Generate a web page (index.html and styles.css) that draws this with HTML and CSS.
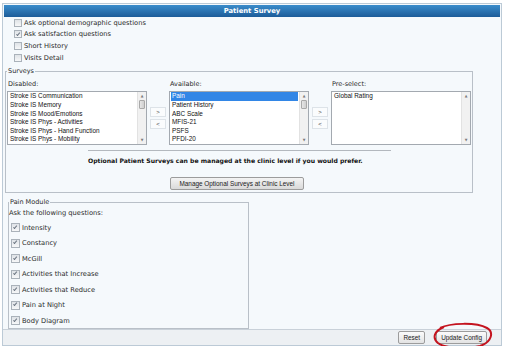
FILE: index.html
```html
<!DOCTYPE html>
<html lang="en">
  <head>
    <meta charset="UTF-8" />
    <title>Patient Survey</title>
    <link rel="stylesheet" href="styles.css">
  </head>
  <body>
    <div class="panel">
      <div class="title">Patient Survey</div>

      <div class="options">
        <label class="opt"><span class="cb"></span>Ask optional demographic questions</label>
        <label class="opt"><span class="cb checked"></span>Ask satisfaction questions</label>
        <label class="opt"><span class="cb"></span>Short History</label>
        <label class="opt"><span class="cb"></span>Visits Detail</label>
      </div>

      <fieldset class="surveys">
        <legend>Surveys</legend>
        <div class="lists">
          <div class="lbl">Disabled:</div>
          <div></div>
          <div class="lbl">Available:</div>
          <div></div>
          <div class="lbl">Pre-select:</div>

          <div class="listbox">
            <div class="items">
              <div class="item">Stroke IS Communication</div>
              <div class="item">Stroke IS Memory</div>
              <div class="item">Stroke IS Mood/Emotions</div>
              <div class="item">Stroke IS Phys - Activities</div>
              <div class="item">Stroke IS Phys - Hand Function</div>
              <div class="item">Stroke IS Phys - Mobility</div>
            </div>
            <div class="scroll"><span class="arr">&#9650;</span><span class="thumb"></span><span class="fill"></span><span class="arr">&#9660;</span></div>
          </div>
          <div class="movers">
            <button class="mv">&gt;</button>
            <button class="mv">&lt;</button>
          </div>
          <div class="listbox">
            <div class="items">
              <div class="item selected">Pain</div>
              <div class="item">Patient History</div>
              <div class="item">ABC Scale</div>
              <div class="item">MFIS-21</div>
              <div class="item">PSFS</div>
              <div class="item">PFDI-20</div>
            </div>
            <div class="scroll"><span class="arr">&#9650;</span><span class="thumb"></span><span class="fill"></span><span class="arr">&#9660;</span></div>
          </div>
          <div class="movers">
            <button class="mv">&gt;</button>
            <button class="mv">&lt;</button>
          </div>
          <div class="listbox">
            <div class="items">
              <div class="item">Global Rating</div>
            </div>
            <div class="scroll"><span class="arr">&#9650;</span><span class="fill"></span><span class="arr">&#9660;</span></div>
          </div>
        </div>

        <div class="notes">
          <div class="rule"></div>
          <p class="note">Optional Patient Surveys can be managed at the clinic level if you would prefer.</p>
        </div>
        <div class="manage">
          <button class="btn">Manage Optional Surveys at Clinic Level</button>
        </div>
      </fieldset>

      <fieldset class="pain">
        <legend>Pain Module</legend>
        <div class="ask">Ask the following questions:</div>
        <div class="questions">
          <label class="q"><span class="cb checked"></span>Intensity</label>
          <label class="q"><span class="cb checked"></span>Constancy</label>
          <label class="q"><span class="cb checked"></span>McGill</label>
          <label class="q"><span class="cb checked"></span>Activities that Increase</label>
          <label class="q"><span class="cb checked"></span>Activities that Reduce</label>
          <label class="q"><span class="cb checked"></span>Pain at Night</label>
          <label class="q"><span class="cb checked"></span>Body Diagram</label>
        </div>
      </fieldset>

      <div class="footer">
        <button class="btn">Reset</button>
        <span class="marked">
          <button class="btn">Update Config</button>
          <svg class="ring" width="61" height="27" viewBox="0 0 61 27">
            <path d="M8 6 C18 1 44 0 55 6 C62 10 60 20 48 24 C36 27 14 27 6 21 C0 16 2 9 12 5" fill="none" stroke="#c4141f" stroke-width="2" />
          </svg>
        </span>
      </div>
    </div>
  </body>
</html>
```

FILE: styles.css
```css
body {
  margin: 0;
  background-color: #fff;
  font-family: "DejaVu Sans", Verdana, sans-serif;
  font-size: 6.7px;
  color: #2a2a2a;
}

.panel {
  margin: 3px 0 0 2px;
  width: 500px;
  height: 343px;
  box-sizing: border-box;
  border: 1px solid #bccad6;
  background-color: #f5f9fc;
  display: flex;
  flex-direction: column;
}

.title {
  margin: 1px 1px 0 1px;
  height: 12px;
  line-height: 12px;
  background: linear-gradient(#3a8ccb, #1c5c99);
  color: #fff;
  font-weight: bold;
  font-size: 6.8px;
  text-align: center;
}

.options {
  padding-left: 11px;
}

.opt {
  display: flex;
  align-items: center;
  height: 11.6px;
}

.cb {
  width: 6px;
  height: 6px;
  border: 1px solid #aab2ba;
  background: linear-gradient(#dfe3e7, #f6f7f8);
  margin-right: 2px;
  position: relative;
}

.cb.checked::after {
  content: "";
  position: absolute;
  left: 2.2px;
  top: 0.3px;
  width: 1.4px;
  height: 3.2px;
  border: solid #6a7480;
  border-width: 0 0.8px 0.8px 0;
  transform: rotate(40deg);
}

fieldset {
  border: 1px solid #b9c0c8;
  margin: 0;
  padding: 0;
}

legend {
  padding: 0 1px;
  line-height: 9px;
  font-size: 6.5px;
}

.surveys {
  margin: 4px 0 0 2px;
  width: 468px;
  box-sizing: border-box;
  padding: 0 1px 2px 1px;
}

.lists {
  display: grid;
  grid-template-columns: 140px 22px 140px 22px 140px;
}

.lbl {
  line-height: 9px;
  margin: 4px 0 1.5px;
  padding-left: 1px;
  font-size: 6.5px;
}

.listbox {
  height: 54px;
  box-sizing: border-box;
  border: 1px solid #a3a9b0;
  background-color: #fff;
  display: flex;
}

.items {
  flex: 1;
  padding: 0.5px 1px;
  font-family: "Liberation Sans", Arial, sans-serif;
  font-size: 6.4px;
  color: #111;
}

.item {
  line-height: 8.6px;
  padding-left: 1px;
}

.item.selected {
  background-color: #3286e6;
  color: #fff;
}

.scroll {
  width: 8px;
  background-color: #f1f1f1;
  border-left: 1px solid #e2e2e2;
  display: flex;
  flex-direction: column;
  align-items: center;
}

.arr {
  font-size: 3.5px;
  line-height: 8px;
  color: #7a7a7a;
}

.thumb {
  width: 6px;
  height: 9px;
  box-sizing: border-box;
  border: 1px solid #a9a9a9;
  background: linear-gradient(90deg, #e6e6e6, #cfcfcf);
  border-radius: 1px;
}

.fill {
  flex: 1;
}

.movers {
  display: flex;
  flex-direction: column;
  justify-content: center;
  align-items: center;
  gap: 2px;
}

.mv {
  width: 16px;
  height: 10px;
  padding: 0;
  border: 1px solid #dde3e8;
  background-color: #fafcfd;
  font-family: "Liberation Sans", Arial, sans-serif;
  font-size: 6px;
  line-height: 8px;
  color: #444;
}

.notes {
  padding-left: 81px;
}

.rule {
  width: 303px;
  margin-top: 5px;
  border-top: 1px solid #b3b8be;
}

.note {
  margin: 5.5px 0 0;
  line-height: 9px;
  font-weight: bold;
  font-size: 6.1px;
  color: #111;
}

.manage {
  display: flex;
  justify-content: center;
  margin-top: 11.5px;
  padding-right: 4px;
}

.btn {
  height: 13px;
  padding: 0 6px;
  border: 1px solid #9c9c9c;
  border-radius: 2px;
  background: linear-gradient(#f4f4f4, #d9d9d9);
  font-family: "Liberation Sans", Arial, sans-serif;
  font-size: 6.4px;
  color: #1a1a1a;
  cursor: pointer;
}

.manage .btn {
  padding: 0 8px;
}

.pain {
  margin: 5.5px 0 0 5px;
  width: 241px;
  box-sizing: border-box;
  padding: 0 0 2.5px 0;
}

.ask {
  line-height: 9px;
  margin-top: 2px;
}

.questions {
  display: flex;
  flex-direction: column;
  gap: 6.5px;
  margin-top: 5px;
  padding-left: 2px;
}

.q {
  display: flex;
  align-items: center;
  height: 9px;
}

.q .cb {
  width: 7px;
  height: 7px;
}

.footer {
  margin-top: auto;
  height: 16px;
  box-sizing: border-box;
  border-top: 1px solid #c9d1d9;
  background-color: #edf0f3;
  display: flex;
  justify-content: flex-end;
  align-items: center;
  gap: 11px;
  padding-right: 14px;
}

.footer .btn {
  padding: 0 4px;
  background: linear-gradient(#fbfbfb, #e3e3e3);
}

.marked {
  position: relative;
  display: flex;
}

.ring {
  position: absolute;
  left: -4px;
  top: -9px;
}
```
